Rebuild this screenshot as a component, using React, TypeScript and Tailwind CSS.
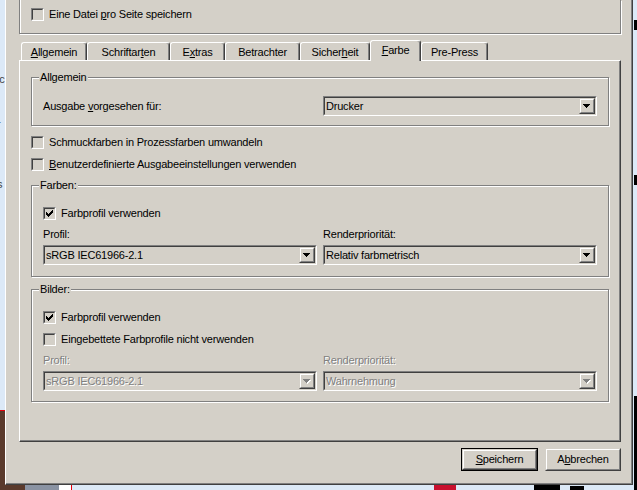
import type { ReactNode } from "react";
import clsx from "clsx";

// classic win2k look
const bg = "bg-[#d4d0c8]";
const etched = "border border-[#808080] shadow-[inset_1px_1px_0_#fff,1px_1px_0_#fff]";
const disabledText = "text-[#808080] [text-shadow:1px_1px_0_#fff]";

function Sunken({ className, children }: { className?: string; children: ReactNode }) {
  return (
    <div className={clsx("border border-t-[#808080] border-l-[#808080] border-r-white border-b-white", className)}>
      <div className="h-full w-full border border-t-[#404040] border-l-[#404040] border-r-[#d4d0c8] border-b-[#d4d0c8]">
        {children}
      </div>
    </div>
  );
}

function Raised({ className, children }: { className?: string; children: ReactNode }) {
  return (
    <div className={clsx("border border-t-[#d4d0c8] border-l-[#d4d0c8] border-r-[#404040] border-b-[#404040]", className)}>
      <div className="flex h-full w-full items-center justify-center border border-t-white border-l-white border-r-[#808080] border-b-[#808080]">
        {children}
      </div>
    </div>
  );
}

const tick = [2, 3, 4, 3, 2, 1, 0];

function CheckBox({ checked, children }: { checked?: boolean; children: ReactNode }) {
  return (
    <label className="flex h-[22px] items-center gap-[5px]">
      <Sunken className="h-[13px] w-[13px] shrink-0">
        <div className="flex h-full w-full items-center justify-center bg-[#d4d0c8]">
          {checked && (
            <svg width="7" height="7" viewBox="0 0 7 7" shapeRendering="crispEdges">
              {tick.map((y, x) => (
                <rect key={x} x={x} y={y} width="1" height="3" fill="#000" />
              ))}
            </svg>
          )}
        </div>
      </Sunken>
      <span>{children}</span>
    </label>
  );
}

function Select({ value, disabled }: { value: string; disabled?: boolean }) {
  return (
    <Sunken className="h-[20px] w-full">
      <div className="flex h-full items-center bg-[#d4d0c8]">
        <span className={clsx("flex-1 pl-[1px]", disabled && disabledText)}>{value}</span>
        <Raised className="h-[16px] w-[16px]">
          <svg width="8" height="5" viewBox="0 0 8 5" shapeRendering="crispEdges">
            {disabled && <path d="M1 1h7L4.5 5z" fill="#fff" />}
            <path d="M0 0h7L3.5 4z" fill={disabled ? "#808080" : "#000"} />
          </svg>
        </Raised>
      </div>
    </Sunken>
  );
}

function Group({ title, className, children }: { title: string; className?: string; children: ReactNode }) {
  return (
    <div className={clsx("relative px-[11px]", etched, className)}>
      <span className="absolute -top-[7px] left-[7px] bg-[#d4d0c8] px-[1px]">{title}</span>
      {children}
    </div>
  );
}

function Label({ children, disabled }: { children: ReactNode; disabled?: boolean }) {
  return (
    <div className={clsx("flex h-[20px] items-center", disabled && disabledText)}>
      <span>{children}</span>
    </div>
  );
}

const tabs: { label: ReactNode; w: string }[] = [
  { label: <><u>A</u>llgemein</>, w: "w-[66px]" },
  { label: <>Schriftar<u>t</u>en</>, w: "w-[83px]" },
  { label: <>E<u>x</u>tras</>, w: "w-[55px]" },
  { label: <>Betrachter</>, w: "w-[75px]" },
  { label: <>Sicher<u>h</u>eit</>, w: "w-[70px]" },
  { label: <><u>F</u>arbe</>, w: "w-[51px]" },
  { label: <>Pre-Press</>, w: "w-[67px]" },
];
const activeTab = 5;

function Button({ children, primary }: { children: ReactNode; primary?: boolean }) {
  const inner = (
    <Raised className="h-full w-full">
      <span>{children}</span>
    </Raised>
  );
  return primary ? (
    <div className="h-[23px] w-[77px] border border-black">{inner}</div>
  ) : (
    <div className="h-[23px] w-[76px]">{inner}</div>
  );
}

export default function App() {
  return (
    <div className="relative h-[490px] w-[637px] overflow-hidden bg-[#dce9f7] font-['Liberation_Sans',Arial,sans-serif] text-[11px] leading-[13px] tracking-[-0.2px] text-black">
      {/* desktop behind the window */}
      <div className="absolute left-[-3px] top-[73px] flex flex-col text-[#444]">
        <span className="h-[45px]">ic</span>
        <span className="h-[60px]">r</span>
        <span className="h-[52px]">s</span>
        <span>t</span>
      </div>
      <div className="absolute left-0 top-[410px] h-[80px] w-[60px] border-t border-red-600 bg-[#5a3a2c]" />
      <div className="absolute left-[25px] top-[485px] h-[5px] w-[34px] bg-[#8a93a3]" />
      <div className="absolute left-[59px] top-[485px] h-[5px] w-[13px] border-r border-red-600 bg-white" />
      <div className="absolute left-[434px] top-[485px] h-[5px] w-[22px] bg-[#c8102e]" />
      <div className="absolute left-[534px] top-[485px] h-[5px] w-[26px] bg-black" />
      <div className="absolute left-[570px] top-[486px] h-[4px] w-[14px] bg-black" />
      <div className="absolute left-[634px] top-[20px] h-[10px] w-[3px] bg-black" />
      <div className="absolute left-[634px] top-[175px] h-[10px] w-[3px] bg-black" />
      <div className="absolute left-[634px] top-[396px] h-[94px] w-[3px] bg-black" />

      <div
        className={clsx(
          "relative ml-[5px] flex h-[485px] w-[628px] flex-col border-b border-l border-r border-b-[#404040] border-l-white border-r-[#404040] pl-[13px] pr-[11px] shadow-[inset_-1px_-1px_0_#808080]",
          bg
        )}
      >
        <div className="h-[34px] border border-t-0 border-[#808080] px-[11px] pt-[3px] shadow-[inset_1px_0_0_#fff,1px_1px_0_#fff]">
          <CheckBox>
            Eine Datei <u>p</u>ro Seite speichern
          </CheckBox>
        </div>

        <div className="mt-[6px] flex h-[20px] items-end pl-[2px]">
          {tabs.map((t, i) =>
            i === activeTab ? (
              <div
                key={i}
                className={clsx(
                  "relative z-10 -mb-[1px] flex h-[21px] items-center justify-center rounded-t-[3px] border-l border-r border-t border-l-white border-r-[#404040] border-t-white pb-[1px] shadow-[inset_-1px_0_0_#808080]",
                  t.w,
                  bg
                )}
              >
                <span>{t.label}</span>
              </div>
            ) : (
              <div
                key={i}
                className={clsx(
                  "flex h-[18px] items-center justify-center rounded-t-[3px] border-l border-r border-t border-l-white border-r-[#404040] border-t-white pt-[1px] shadow-[inset_-1px_0_0_#808080]",
                  t.w
                )}
              >
                <span>{t.label}</span>
              </div>
            )
          )}
        </div>

        <div className="h-[382px] border border-b-[#404040] border-l-white border-r-[#404040] border-t-white px-[11px] pt-[16px] shadow-[inset_-1px_-1px_0_#808080]">
          <Group title="Allgemein" className="pb-[9px] pt-[18px]">
            <div className="grid grid-cols-2 gap-x-[6px]">
              <Label>
                Ausgabe <u>v</u>orgesehen für:
              </Label>
              <Select value="Drucker" />
            </div>
          </Group>

          <div className="mt-[5px]">
            <CheckBox>Schmuckfarben in Prozessfarben umwandeln</CheckBox>
            <CheckBox>
              <u>B</u>enutzerdefinierte Ausgabeeinstellungen verwenden
            </CheckBox>
          </div>

          <Group title="Farben:" className="mt-[10px] pb-[11px] pt-[16px]">
            <CheckBox checked>Farbprofil verwenden</CheckBox>
            <div className="grid grid-cols-2 gap-x-[6px]">
              <Label>Profil:</Label>
              <Label>Renderpriorität:</Label>
              <div className="mt-[1px]">
                <Select value="sRGB IEC61966-2.1" />
              </div>
              <div className="mt-[1px]">
                <Select value="Relativ farbmetrisch" />
              </div>
            </div>
          </Group>

          <Group title="Bilder:" className="mt-[12px] pb-[10px] pt-[16px]">
            <CheckBox checked>Farbprofil verwenden</CheckBox>
            <CheckBox>Eingebettete Farbprofile nicht verwenden</CheckBox>
            <div className="grid grid-cols-2 gap-x-[6px]">
              <Label disabled>Profil:</Label>
              <Label disabled>Renderpriorität:</Label>
              <div className="mt-[1px]">
                <Select value="sRGB IEC61966-2.1" disabled />
              </div>
              <div className="mt-[1px]">
                <Select value="Wahrnehmung" disabled />
              </div>
            </div>
          </Group>
        </div>

        <div className="mt-[6px] flex justify-end gap-[7px]">
          <Button primary>
            <u>S</u>peichern
          </Button>
          <Button>
            A<u>b</u>brechen
          </Button>
        </div>
      </div>
    </div>
  );
}
